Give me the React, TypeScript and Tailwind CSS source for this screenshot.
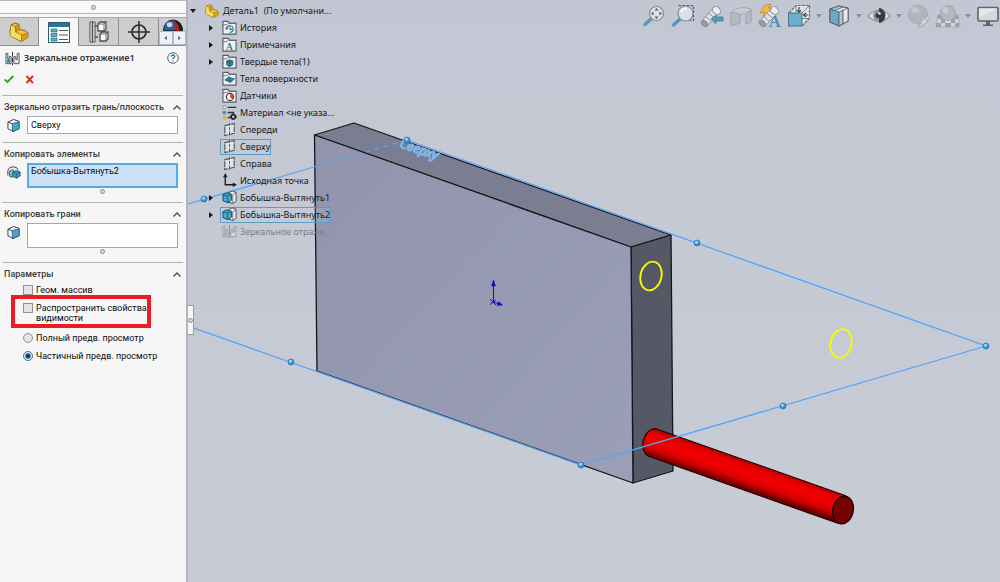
import { useState, type ReactNode } from "react";

type IconProps = { className?: string };

const STEEL = "#4b4f55";

// ---------- shared icons ----------

const PartIcon = ({ className = "" }: IconProps) => (
  <svg viewBox="0 0 20 20" className={className} aria-hidden="true">
    <path d="M1 10 L2 3 L6 1 L10 2.500 L10.500 7.500 L16 8.500 L19 11 L19 15.500 L12.500 19.500 L1.500 14 Z" fill="#f6c62f" stroke="#8a6410" strokeWidth="1" strokeLinejoin="round" />
    <path d="M2 3 L6 4.500 L6.500 10 L12.500 13 L12.500 19 L1.500 14 Z" fill="#fbdc62" />
    <path d="M6 4.500 L10 2.500 L10.500 7.500 L6.500 10 Z" fill="#cf961b" />
    <path d="M12.500 13 L19 11 L19 15.500 L12.500 19.500 Z" fill="#d89e20" />
    <path d="M2 3 L6 4.500 L10 2.500 M6 4.500 L6.500 10 L12.500 13 L19 11 M12.500 13 V19.500 M6.500 10 L10.500 7.500" fill="none" stroke="#9c7415" strokeWidth=".8" />
  </svg>
);

const MirrorIcon = ({ className = "" }: IconProps) => (
  <svg viewBox="0 0 16 16" className={className} fill="none" aria-hidden="true">
    <path d="M1 2.500 V13.500 H6.500 V6 H4.500 V9 H3 V2.500 Z M15 2.500 V13.500 H9.500 V6 H11.500 V9 H13 V2.500 Z" fill="#eef2f5" stroke={STEEL} strokeWidth="1" />
    <path d="M2 9.500 H5.500 V12.500 H2 Z" fill="#3387ad" />
    <path d="M8 1 V15" stroke="#222" strokeWidth="1" strokeDasharray="5 1" />
  </svg>
);

const FaceIcon = ({ className = "" }: IconProps) => (
  <svg viewBox="0 0 14 15" className={className} strokeLinejoin="round" aria-hidden="true">
    <path d="M1 4 L7 1 L13 3 L13 11 L6.500 14 L1 11 Z" fill="#f4f5f6" stroke="#33373b" strokeWidth="1" />
    <path d="M5.500 5.500 L13 3.500 V11 L6 14 Z" fill="#4aa5cb" stroke="#1d5872" strokeWidth=".8" />
    <path d="M1 4 L5.500 5.500" stroke="#33373b" strokeWidth=".9" />
  </svg>
);

const FeatureIcon = ({ className = "" }: IconProps) => (
  <svg viewBox="0 0 16 16" className={className} strokeLinejoin="round" aria-hidden="true">
    <path d="M1 12 V6 Q2 2 7 2 L11 3 L13 6" fill="#e9ecee" stroke="#3f4449" strokeWidth="1.100" />
    <path d="M3 7 L6 5.500 L8 6.500 V13 L5 14 L3 13 Z" fill="#8fc1d6" stroke="#3f4449" strokeWidth="1" />
    <path d="M6.500 8.500 L10.500 6.500 L15 8 V12.500 L11 15 L6.500 13 Z" fill="#3c9cc4" stroke="#1c546d" strokeWidth="1" />
    <path d="M6.500 8.500 L11 10 L15 8 M11 10 V15" fill="none" stroke="#1c546d" strokeWidth=".8" />
  </svg>
);

const BossIcon = ({ className = "" }: IconProps) => (
  <svg viewBox="0 0 16 16" className={className} strokeLinejoin="round" aria-hidden="true">
    <path d="M7 3 L11 1 L15 2.500 V12 L11.500 14.500 L7 13 Z" fill="#f1f1ef" stroke="#494c50" strokeWidth="1" />
    <path d="M15 2.500 L11.500 5 V14" fill="none" stroke="#494c50" strokeWidth=".8" />
    <path d="M1 5 L5 3 L10 4.500 V11 L6 13.500 L1 11.500 Z" fill="#4aa8cd" stroke="#174c62" strokeWidth="1" />
    <path d="M1 5 L6 6.500 L10 4.500 M6 6.500 V13.500" fill="none" stroke="#174c62" strokeWidth=".8" />
  </svg>
);

const PlaneIcon = ({ className = "" }: IconProps) => (
  <svg viewBox="0 0 16 16" className={className} fill="none" aria-hidden="true">
    <path d="M3 4 L13 1.500 V12 L3 14.500 Z" fill="#e2e4e8" stroke="#4d5056" strokeWidth="1.200" strokeDasharray="6 .8" />
    <path d="M8 1 V15" stroke="#4d5056" strokeWidth="1" strokeDasharray="3 1.500" />
  </svg>
);

const OriginIcon = ({ className = "" }: IconProps) => (
  <svg viewBox="0 0 16 16" className={className} aria-hidden="true">
    <path d="M3.500 3 V12.500 H12" fill="none" stroke="#1e1f22" strokeWidth="1.500" />
    <path d="M3.500 0 L6 4.500 H1 Z M16 12.500 L11.500 10 V15 Z" fill="#1e1f22" />
  </svg>
);

const MaterialIcon = ({ className = "" }: IconProps) => (
  <svg viewBox="0 0 16 16" className={className} aria-hidden="true">
    <path d="M6 2.500 H15 M6 8 H13 M6 13.500 H9" stroke="#303236" strokeWidth="1.500" />
    <circle cx="2.500" cy="2.500" r="1.600" fill="#fff" stroke="#666" strokeWidth=".8" />
    <circle cx="2.500" cy="8" r="2" fill="#3996c3" />
    <circle cx="2.500" cy="13.500" r="2" fill="#eeb31d" />
    <circle cx="12" cy="12.500" r="2.300" fill="none" stroke="#26282b" strokeWidth="1.800" />
    <path d="M12 8.500 V10 M12 15 V16 M8 12.500 H10 M14 12.500 H16" stroke="#26282b" strokeWidth="1.300" />
  </svg>
);

const FolderIcon = ({ className = "", children }: IconProps & { children?: ReactNode }) => (
  <svg viewBox="0 0 16 16" className={className} aria-hidden="true">
    <path d="M1 15 V1.500 H6.500 L8 3.500 H15 V15 Z" fill="#f0f1f2" stroke="#5a5d62" strokeWidth="1.200" />
    <path d="M1 5 H5 L7 3.500 H15" fill="none" stroke="#5a5d62" strokeWidth=".8" />
    {children}
  </svg>
);

// ---------- property manager ----------

const TreeTabIcon = () => (
  <svg viewBox="0 0 20 24" className="h-6 w-5" fill="none" stroke="#4d4f52" aria-hidden="true">
    <path d="M1 2 H6 V22 H1 Z" fill="#f0f0f0" />
    <path d="M3.500 2 V22 M6 6 H9 M6 17 H9" strokeWidth="1.500" />
    <path d="M9 4 L11 2 H17 V9 L15 11 H9 Z M11 14 L13 12 H19 V19 L17 21 H11 Z" fill="#fafafa" strokeWidth="1.300" />
    <path d="M9 4 H15 V11 M15 4 L17 2 M11 14 H17 V21 M17 14 L19 12" strokeWidth=".8" />
  </svg>
);

const ListTabIcon = () => (
  <svg viewBox="0 0 22 21" className="h-[21px] w-[22px]" aria-hidden="true">
    <rect x=".5" y=".5" width="21" height="20" fill="#fdfdfd" stroke="#33566b" />
    <rect x="1" y="1" width="20" height="4" fill="#2d7398" />
    <path d="M3 7 H9 V10 H3 Z M3 11.500 H9 V14.500 H3 Z M3 16 H9 V19 H3 Z" fill="#5baed0" stroke="#2d6480" strokeWidth=".7" />
    <path d="M11 8.500 H20 M11 13 H20 M11 17.500 H20" stroke="#56595d" strokeWidth="1.200" />
  </svg>
);

const TargetIcon = () => (
  <svg viewBox="0 0 22 22" className="size-[22px]" fill="none" stroke="#2b2c2e" aria-hidden="true">
    <circle cx="11" cy="11" r="7" strokeWidth="1.700" />
    <path d="M11 0 V22 M0 11 H22" strokeWidth="1.500" />
  </svg>
);

const AppearanceIcon = () => (
  <svg viewBox="0 0 22 12" className="h-3 w-[22px]" aria-hidden="true">
    <path d="M1 12 A10 11 0 0 1 21 12 Z" fill="#2c5f9c" stroke="#1d2430" />
    <path d="M11 1 Q17 4 17 12 H21 Q21 2 11 1" fill="#191919" />
    <path d="M11 1 Q13 4 13 12 H18 Q17 4 11 1" fill="#c41c15" />
    <ellipse cx="7.500" cy="6" rx="3" ry="2.500" fill="#c3daf0" />
  </svg>
);

function Tabs() {
  const tab = "flex w-10 shrink-0 items-center justify-center border-r border-b border-[#8e8e8e] bg-[#cdcdcd]";
  return (
    <div className="mt-[3px] flex h-[29px] border-t border-[#a8a8a8]">
      <button aria-label="FeatureManager" className="flex w-[39px] shrink-0 items-center justify-center border-r border-b border-[#8e8e8e] bg-[#cdcdcd]">
        <PartIcon className="size-5" />
      </button>
      <button aria-label="PropertyManager" className="flex w-10 shrink-0 items-center justify-center border-r border-[#8e8e8e] bg-[#f7f7f7]">
        <ListTabIcon />
      </button>
      <button aria-label="ConfigurationManager" className={tab}><TreeTabIcon /></button>
      <button aria-label="DimXpertManager" className={tab}><TargetIcon /></button>
      <div className="flex flex-1 flex-col items-center overflow-hidden border-b border-[#8e8e8e] bg-[#cdcdcd] pt-px">
        <AppearanceIcon />
        <div className="flex h-[15px] w-full text-[#466eaa]">
          <button aria-label="Назад" className="flex flex-1 items-center justify-center border border-[#b5b8c2] bg-[#eef0f6]">
            <svg viewBox="0 0 3 4" className="h-1 w-[3px]"><path d="M3 0 V4 L0 2 Z" fill="currentColor" /></svg>
          </button>
          <button aria-label="Вперед" className="flex flex-1 items-center justify-center border border-[#b5b8c2] bg-[#eef0f6]">
            <svg viewBox="0 0 3 4" className="h-1 w-[3px]"><path d="M0 0 V4 L3 2 Z" fill="currentColor" /></svg>
          </button>
        </div>
      </div>
    </div>
  );
}

const Grip = () => <span className="mx-auto block size-[5px] rounded-full border border-[#8d8d8d] bg-[#d8d8d8]" />;

function Section({ title, children }: { title: string; children: ReactNode }) {
  const [open, setOpen] = useState(true);
  return (
    <section className="mr-[3px] ml-[2px] border-t border-[#b4b4b4] pt-1 pb-2">
      <button
        onClick={() => setOpen(!open)}
        aria-expanded={open}
        className="flex h-[14px] w-full items-center justify-between px-[2px] pt-px text-left font-medium whitespace-nowrap text-[#3a3a3a]"
      >
        {title}
        <svg viewBox="0 0 8 5" className="h-[5px] w-2 shrink-0" fill="none" stroke="#4a4a4a" strokeWidth="1.300">
          <path d="M.5 4.500 L4 1 L7.500 4.500" />
        </svg>
      </button>
      {open && children}
    </section>
  );
}

const choice = "flex items-start gap-[3px] pl-[21px] leading-[10px] whitespace-nowrap";
const box = "size-[10px] shrink-0 appearance-none border border-[#8f9299] bg-[#e3e5e8] checked:bg-[#3b7fa8]";
const radio =
  "size-[10px] shrink-0 appearance-none rounded-full border border-[#8f9299] bg-[#e3e5e8] checked:border-[#4f6f85] checked:bg-[radial-gradient(circle,#0d3b5c_0_25%,#3b8fc0_45%,#e8eef2_60%)]";

function PropertyPanel() {
  const [preview, setPreview] = useState("partial");
  return (
    <aside className="w-[188px] shrink-0 border-r-2 border-[#b1b4ba] bg-[#f6f6f6] font-['Roboto',sans-serif] text-[9px] text-[#0c0c0c]">
      <div className="flex h-[14px] items-center border-y border-[#b9b9b9] bg-[#f9f9f9]">
        <Grip />
      </div>
      <Tabs />
      <header className="flex h-6 items-center gap-1 pr-[7px] pl-[5px]">
        <MirrorIcon className="size-[15px]" />
        <h1 className="flex-1 font-['Noto_Sans',sans-serif] font-semibold text-[#333]">Зеркальное отражение1</h1>
        <button aria-label="Справка">
          <svg viewBox="0 0 12 12" className="size-3">
            <circle cx="6" cy="6" r="5.300" fill="#fff" stroke="#555b61" />
            <path d="M4.200 4.700 Q4.300 3 6 3 Q7.800 3 7.800 4.500 Q7.800 5.400 6 6.400 V7.200 M6 8.200 V9.400" fill="none" stroke="#2d739b" strokeWidth="1.300" />
          </svg>
        </button>
      </header>
      <div className="flex h-[25px] items-start gap-[11px] pt-1 pl-1">
        <button aria-label="ОК">
          <svg viewBox="0 0 10 10" className="size-[10px]"><path d="M.5 5.500 L3.500 8 L9.300 2" fill="none" stroke="#39a02c" strokeWidth="1.900" /></svg>
        </button>
        <button aria-label="Отмена">
          <svg viewBox="0 0 10 10" className="size-[10px]"><path d="M1.500 2 L8 9 M8 2 L1.500 9" fill="none" stroke="#dc2f17" strokeWidth="1.900" /></svg>
        </button>
      </div>

      <Section title="Зеркально отразить грань/плоскость">
        <div className="mt-[2px] flex items-start gap-[7px] pr-[5px] pl-[5px]">
          <FaceIcon className="mt-[2px] h-[15px] w-[13px] shrink-0" />
          <input aria-label="Грань/плоскость" defaultValue="Сверху" className="h-[18px] min-w-0 flex-1 border border-[#a0a6b5] bg-white px-[3px]" />
        </div>
      </Section>
      <Section title="Копировать элементы">
        <div className="mt-[2px] flex items-start gap-[6px] pr-[5px] pl-[5px]">
          <FeatureIcon className="mt-[2px] size-[14px] shrink-0" />
          <div className="min-w-0 flex-1">
            <textarea aria-label="Элементы" defaultValue="Бобышка-Вытянуть2" className="block h-[25px] w-full resize-none overflow-hidden border-2 border-[#54acdf] bg-[#cde0f7] px-[2px] leading-[13px]" />
            <div className="h-[6px] pt-px"><Grip /></div>
          </div>
        </div>
      </Section>
      <Section title="Копировать грани">
        <div className="mt-[2px] flex items-start gap-[7px] pr-[5px] pl-[5px]">
          <FaceIcon className="mt-[2px] h-[15px] w-[13px] shrink-0" />
          <div className="min-w-0 flex-1">
            <textarea aria-label="Грани" className="block h-[25px] w-full resize-none overflow-hidden border border-[#a0a6b5] bg-white px-[3px] leading-[13px]" />
            <div className="h-[6px] pt-px"><Grip /></div>
          </div>
        </div>
      </Section>
      <Section title="Параметры">
        <label className={`${choice} mt-1`}>
          <input type="checkbox" className={box} />
          Геом. массив
        </label>
        <div className="mr-8 ml-[9px] border-4 border-[#ed1c24] pt-1 pb-px">
          <label className="flex items-start gap-[3px] pl-2 leading-[10px] whitespace-nowrap">
            <input type="checkbox" className={box} />
            <span>Распространить свойства<br />видимости</span>
          </label>
        </div>
        <label className={`${choice} mt-[5px]`}>
          <input type="radio" name="preview" className={radio} checked={preview === "full"} onChange={() => setPreview("full")} />
          Полный предв. просмотр
        </label>
        <label className={`${choice} mt-2`}>
          <input type="radio" name="preview" className={radio} checked={preview === "partial"} onChange={() => setPreview("partial")} />
          Частичный предв. просмотр
        </label>
      </Section>
    </aside>
  );
}

// ---------- feature tree ----------

type TreeItem = { label: string; icon: ReactNode; arrow?: boolean; state?: "selected" | "dimmed" };

const ic = "size-[15px] shrink-0";

const treeItems: TreeItem[] = [
  {
    label: "История",
    arrow: true,
    icon: (
      <FolderIcon className={ic}>
        <path d="M5 9 A3.500 3.500 0 1 1 8 13 M8.500 7 V10 H11" fill="none" stroke="#2d7fa9" strokeWidth="1.200" />
        <path d="M3 8 H7 L5 11 Z" fill="#2d7fa9" />
      </FolderIcon>
    ),
  },
  {
    label: "Примечания",
    arrow: true,
    icon: (
      <FolderIcon className={ic}>
        <text x="8" y="13.500" fontSize="10" fontWeight="700" textAnchor="middle" fill="#2a7ca6" fontFamily="Liberation Serif">A</text>
      </FolderIcon>
    ),
  },
  {
    label: "Твердые тела(1)",
    arrow: true,
    icon: (
      <FolderIcon className={ic}>
        <path d="M5 7.500 L8 6 L11.500 7.500 V11.500 L8 13.500 L5 11.500 Z" fill="#2f86ad" stroke="#174b64" strokeWidth=".8" />
        <path d="M5 7.500 L8 9 L11.500 7.500 M8 9 V13" fill="none" stroke="#174b64" strokeWidth=".7" />
      </FolderIcon>
    ),
  },
  {
    label: "Тела поверхности",
    icon: (
      <FolderIcon className={ic}>
        <path d="M3 9.500 L7.500 6 Q10 8.500 13.500 8 L9 12.500 Q6.500 10.500 3 9.500" fill="#338db5" stroke="#1b546e" strokeWidth=".8" />
        <path d="M5.500 8 Q8 10 11 10.500 M10 7.500 L6 11" fill="none" stroke="#1b546e" strokeWidth=".6" />
      </FolderIcon>
    ),
  },
  {
    label: "Датчики",
    icon: (
      <FolderIcon className={ic}>
        <circle cx="8.500" cy="9.500" r="3.800" fill="#fff" stroke="#333" strokeWidth="1.200" />
        <path d="M8.500 9.500 L9 6 A3.500 3.500 0 0 1 11 12 Z" fill="#d8402a" />
      </FolderIcon>
    ),
  },
  { label: "Материал <не указа...", icon: <MaterialIcon className={ic} /> },
  { label: "Спереди", icon: <PlaneIcon className={ic} /> },
  { label: "Сверху", icon: <PlaneIcon className={ic} />, state: "selected" },
  { label: "Справа", icon: <PlaneIcon className={ic} /> },
  { label: "Исходная точка", icon: <OriginIcon className={ic} /> },
  { label: "Бобышка-Вытянуть1", arrow: true, icon: <BossIcon className={ic} /> },
  { label: "Бобышка-Вытянуть2", arrow: true, icon: <BossIcon className={ic} />, state: "selected" },
  { label: "Зеркальное отраже...", icon: <MirrorIcon className={`${ic} opacity-40 grayscale`} />, state: "dimmed" },
];

const itemStyle = {
  normal: "border-transparent",
  selected: "border-[#5e9cc4] bg-[#b9d6ea]/15",
  dimmed: "border-transparent text-[#7b7e88]",
};

function FeatureTree() {
  return (
    <ul className="pt-[2px] pl-[2px] text-[9px] leading-[15px] whitespace-nowrap text-[#17181b]">
      <li className="flex h-[17px] items-center">
        <svg viewBox="0 0 6 4" className="h-1 w-[6px]"><path d="M0 0 H6 L3 4 Z" fill="#17181b" /></svg>
        <PartIcon className="mr-1 ml-[9px] size-[14px]" />
        Деталь1&nbsp; (По умолчани...
      </li>
      {treeItems.map((item) => (
        <li key={item.label} className="flex h-[17px] items-center pl-[18px]">
          <span className="w-3">
            {item.arrow && (
              <svg viewBox="0 0 4 6" className="ml-px h-[6px] w-1"><path d="M0 0 V6 L4 3 Z" fill="#17181b" /></svg>
            )}
          </span>
          <span className={`flex h-4 items-center gap-[3px] border pl-px ${itemStyle[item.state ?? "normal"]}`}>
            {item.icon}
            {item.label}
          </span>
        </li>
      ))}
    </ul>
  );
}

// ---------- view toolbar ----------

const Tube = () => (
  <g stroke="#85898f" strokeLinejoin="round">
    <path d="M2 17 L13 4 L20 9 L7 22 Z" fill="#e6e7e9" />
    <ellipse cx="16.500" cy="6.500" rx="4.500" ry="3.500" transform="rotate(40 16.500 6.500)" fill="#f4f4f4" />
    <ellipse cx="4.500" cy="19.500" rx="3.800" ry="2.500" transform="rotate(40 4.500 19.500)" fill="#8f949a" />
    <path d="M6 12.500 L11.500 17.500 M9 9.500 L14.500 14" />
  </g>
);

const viewTools: { label: string; caret?: boolean; dim?: boolean; art: ReactNode }[] = [
  {
    label: "Изменить в размер экрана",
    art: (
      <>
        <path d="M3 20.500 L9.500 14.500" stroke="#488fb3" strokeWidth="3.500" strokeLinecap="round" />
        <circle cx="14.500" cy="9.500" r="7" fill="#e5e9ed" stroke="#7a7f85" strokeWidth="1.200" />
        <path d="M14.500 4 L16.500 6.500 H12.500 Z M14.500 15 L16.500 12.500 H12.500 Z M9 9.500 L11.500 7.500 V11.500 Z M20 9.500 L17.500 7.500 V11.500 Z" fill="#42464b" />
      </>
    ),
  },
  {
    label: "Увеличить элемент вида",
    art: (
      <>
        <path d="M7.500 1.500 H22.500 V16.500 H19" fill="none" stroke="#45494e" strokeWidth="1.200" strokeDasharray="2.500 1.500" />
        <path d="M2.500 21 L9 15" stroke="#488fb3" strokeWidth="3.500" strokeLinecap="round" />
        <circle cx="14.500" cy="9.500" r="7.500" fill="#dce5eb" stroke="#7b8187" strokeWidth="1.200" />
        <path d="M10 8 Q12 4 16 5" fill="none" stroke="#fff" strokeWidth="2" />
      </>
    ),
  },
  {
    label: "Предыдущий вид",
    art: (
      <>
        <Tube />
        <path d="M11 15 L16 11 V13 H23 V17 H16 V19.500 Z" fill="#438fb7" stroke="#2f6d8f" strokeWidth=".8" />
      </>
    ),
  },
  {
    label: "Разрез",
    dim: true,
    art: (
      <>
        <path d="M2 8 Q11 1 22 5 V18 L17 20 V11 Q13 8 11 12 V19 L2 22 Z" fill="#d3d5da" stroke="#73777d" />
        <path d="M2 8 L11 10 V19 L2 22 Z M17 9 L22 6 V18 L17 20 Z" fill="#a9adb4" stroke="#73777d" />
        <path d="M2 12 L7 9 M2 17 L11 11 M3 21 L11 16 M17 13 L22 9 M17 18 L22 13" stroke="#7e838a" strokeWidth=".7" />
      </>
    ),
  },
  {
    label: "Динамические примечания",
    art: (
      <>
        <Tube />
        <path d="M7 1 L13 0 L10 4 H14 L5 13 L7 8 L2 9 Z" fill="#f7b932" stroke="#be7b1c" strokeWidth=".8" />
        <text x="17" y="22.500" fontSize="17" fontWeight="700" textAnchor="middle" fill="#3a83ac" fontFamily="Liberation Serif">A</text>
      </>
    ),
  },
  {
    label: "Ориентация вида",
    caret: true,
    art: (
      <>
        <path d="M2 9 L9 1.500 H22.500 V14 L15 22" fill="#e7e8ea" stroke="#54585e" strokeWidth="1.200" strokeDasharray="3 1" />
        <path d="M15 9 L22.500 1.500 M9 2 V8 M22 14.500 H15" stroke="#54585e" strokeWidth=".8" />
        <path d="M12 3 V8 M10 6 L12 8.500 L14 6 M21 11 H17 M19 9 L16.500 11 L19 13" fill="none" stroke="#333" strokeWidth="1.200" />
        <rect x="1.500" y="9" width="13.500" height="13" fill="#5ea9cd" stroke="#2c6987" />
      </>
    ),
  },
  {
    label: "Стиль отображения",
    caret: true,
    art: (
      <g stroke="#3e4a52" strokeWidth=".8" strokeLinejoin="round">
        <path d="M3 5 L12 2 L21 4 V17 L12 22 L3 18 Z" fill="#e9ebec" strokeWidth="1.200" />
        <path d="M3 5 L12 8 V22 L3 18 Z" fill="#5aa6c8" />
        <path d="M3 5 L12 2 L16 3 L8 6.500 Z" fill="#93cade" />
        <path d="M12 8 L16 6.200 V19.800 L12 22 Z" fill="#a9c9d8" />
        <path d="M16 6.200 L21 4 V17 L16 19.800 Z" fill="#eceded" />
      </g>
    ),
  },
  {
    label: "Скрыть/показать",
    caret: true,
    art: (
      <>
        <path d="M1 12 Q12 0 23 12 Q12 23 1 12 Z" fill="#e8e8e7" stroke="#8a8c90" strokeWidth="1.200" />
        <circle cx="12" cy="11.500" r="6" fill="#8a8c8f" />
        <path d="M12 4 A6 7 0 0 1 12 19 Z" fill="#252628" />
        <circle cx="11" cy="11.500" r="2.500" fill="#1e1f20" />
        <circle cx="12.500" cy="9.500" r="1.200" fill="#fff" />
      </>
    ),
  },
  {
    label: "Редактировать внешний вид",
    dim: true,
    art: (
      <>
        <circle cx="11" cy="10.500" r="9.500" fill="#969ba3" stroke="#777b82" />
        <ellipse cx="8" cy="6" rx="4" ry="3" fill="#c3c7ce" />
        <path d="M12 23 L13 18 L20 12 L23 15 L16 22 Z" fill="#e2e4e7" stroke="#777b82" />
        <path d="M13 18 L16 22 M18 14 L21 17" stroke="#777b82" />
      </>
    ),
  },
  {
    label: "Применить сцену",
    caret: true,
    dim: true,
    art: (
      <>
        <path d="M2 11 H22 L24 23 H0 Z" fill="#e9eaec" stroke="#7d8188" strokeWidth=".8" />
        <path d="M2 11 H6 V15 H1 Z M18 11 H22 L23 15 H18 Z M5 15 H9 V19 H5 Z M15 15 H19 V19 H15 Z M9 19 H15 V23 H9 Z M0 19 H5 V23 H0 Z M19 19 H23 V23 H19 Z" fill="#646970" />
        <circle cx="12" cy="9" r="7.500" fill="#9ba0a8" stroke="#777b82" />
        <circle cx="9.500" cy="6" r="3" fill="#cfd2d8" />
      </>
    ),
  },
  {
    label: "Настройки вида",
    art: (
      <>
        <path d="M10 17 H14 V21 H10 Z M7 20.500 H17 V22 H7 Z" fill="#505256" />
        <rect x="2" y="3.500" width="20" height="13.500" rx="1" fill="#d9dcdd" stroke="#505256" strokeWidth="1.600" />
        <path d="M3 4.500 H21 L3 13.500 Z" fill="#eff0f0" />
      </>
    ),
  },
];

function ViewToolbar() {
  return (
    <div role="toolbar" className="flex items-center gap-[5px] pt-1">
      {viewTools.map((tool) => (
        <div key={tool.label} className="flex items-center gap-[5px]">
          <button aria-label={tool.label}>
            <svg viewBox="0 0 24 24" className={`size-6 overflow-visible ${tool.dim ? "opacity-40" : "opacity-85"}`}>{tool.art}</svg>
          </button>
          {tool.caret && (
            <svg viewBox="0 0 6 4" className="h-1 w-[6px]"><path d="M0 0 H6 L3 4 Z" fill="#8b9098" /></svg>
          )}
        </div>
      ))}
    </div>
  );
}

// ---------- 3D model ----------

const handles = [
  [204, 199],
  [407, 140],
  [697, 243],
  [986, 346],
  [783, 406],
  [581, 465],
  [291, 362],
];

const Scene = () => (
  <svg viewBox="188 0 812 582" preserveAspectRatio="xMinYMin meet" className="absolute inset-0 h-full w-full" role="img" aria-label="Модель">
    <defs>
      <linearGradient id="front" x1="0" y1="0" x2="1" y2="1">
        <stop offset="0" stopColor="#9194ac" />
        <stop offset="1" stopColor="#9b9eb7" />
      </linearGradient>
      <linearGradient id="rod" gradientUnits="userSpaceOnUse" x1="752" y1="461" x2="742" y2="490">
        <stop offset="0" stopColor="#a80000" />
        <stop offset=".2" stopColor="#e60000" />
        <stop offset=".45" stopColor="#f40000" />
        <stop offset=".7" stopColor="#d40000" />
        <stop offset="1" stopColor="#4a0000" />
      </linearGradient>
      <radialGradient id="ball" cx=".4" cy=".35">
        <stop offset="0" stopColor="#d9f3ff" />
        <stop offset=".5" stopColor="#5cb8f0" />
        <stop offset="1" stopColor="#2c7fc0" />
      </radialGradient>
    </defs>

    <g stroke="#15161a" strokeWidth="1.300" strokeLinejoin="round">
      <path d="M314.500 135 L354 123 L671 235 L631 247 Z" fill="#7b7d90" />
      <path d="M631 247 L671 235 L673 471 L633 483 Z" fill="#565965" />
      <path d="M314.500 135 L631 247 L633 483 L317 371 Z" fill="url(#front)" />
    </g>

    <path d="M655 428.500 L845 495.500 A10.500 14.500 15 0 1 837 523 L648 456 A10.500 14.500 15 0 1 655 428.500 Z" fill="url(#rod)" stroke="#240000" strokeWidth="1.200" />
    <ellipse cx="843" cy="510" rx="10.300" ry="14" transform="rotate(12 843 510)" fill="#780000" stroke="#160000" strokeWidth="1.200" />

    <g fill="none" stroke="#55a5f7" strokeWidth="1.300">
      <path d="M188 204 L314 167" />
      <path d="M314 167 L407 140" strokeDasharray="5 4" />
      <path d="M407 140 L986 346 L581 465 L188 326" />
    </g>
    <text x="399" y="147" transform="rotate(19 399 147)" fontSize="13" fontStyle="italic" fill="none" stroke="#7db9ef" strokeWidth="1.100" fontFamily="Noto Sans">Сверху</text>
    {handles.map(([x, y]) => (
      <circle key={`${x}-${y}`} cx={x} cy={y} r="3" fill="url(#ball)" stroke="#2e78ac" strokeWidth=".8" />
    ))}

    <g fill="none" stroke="#fdf900" strokeWidth="1.800">
      <ellipse cx="651" cy="276" rx="10.500" ry="14.500" transform="rotate(14 651 276)" />
      <ellipse cx="841" cy="343.500" rx="10.500" ry="14.500" transform="rotate(14 841 343.500)" />
    </g>

    <g stroke="#0b0bd0" fill="#0b0bd0">
      <path d="M493.500 302 V284 M493.500 302 L499 304 M490 299 L496 305 M490 304.500 L496 300" />
      <path d="M493.500 280 L495.500 286 H491.500 Z M502.500 305 L497 305.500 L498.500 301.500 Z" strokeWidth=".5" />
    </g>
  </svg>
);

export default function App() {
  return (
    <div className="flex min-h-screen bg-[#c4c9d4] font-['Noto_Sans',sans-serif]">
      <PropertyPanel />
      <main className="relative min-w-0 flex-1 overflow-hidden bg-linear-to-b from-[#c2c7d3] to-[#c7ccd5]">
        <Scene />
        <div className="relative flex items-start justify-between">
          <FeatureTree />
          <ViewToolbar />
        </div>
        <button aria-label="Свернуть панель" className="absolute top-[305px] left-0 flex h-[30px] w-[6px] items-center border-y border-r border-[#9a9da3] bg-[#f6f6f6]">
          <Grip />
        </button>
      </main>
    </div>
  );
}
